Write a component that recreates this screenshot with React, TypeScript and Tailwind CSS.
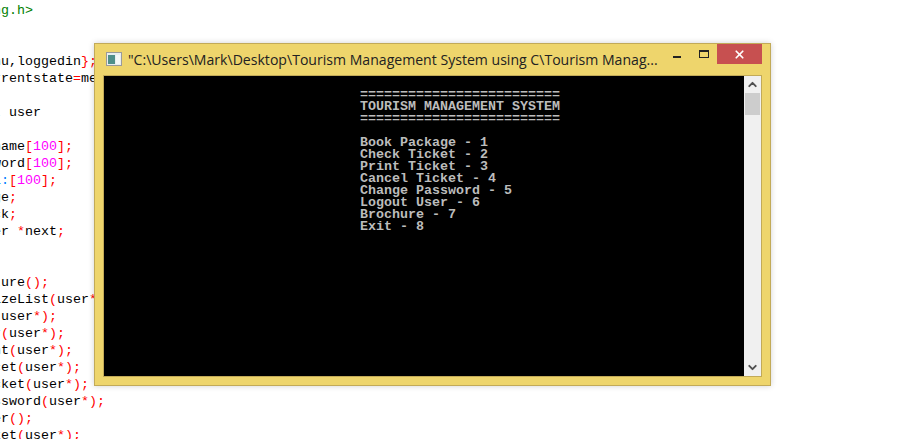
import type { ReactNode } from "react";
import { X, ChevronUp, ChevronDown } from "lucide-react";

// token helpers for the editor text behind the console
const R = ({ children }: { children: ReactNode }) => <span className="text-[#ff0000]">{children}</span>;
const N = ({ children }: { children: ReactNode }) => <span className="text-[#ff00ff]">{children}</span>;
const B = ({ children }: { children: ReactNode }) => <span className="text-[#0080ff]">{children}</span>;

const Arg = () => (
  <>
    <R>(</R>user<R>*);</R>
  </>
);

const codeLines: ReactNode[] = [
  <span className="text-[#008000]">ng.h&gt;</span>,
  "",
  "",
  <>
    nu,loggedin<R>{"};"}</R>
  </>,
  <>
    rrentstate<R>=</R>menu
  </>,
  "",
  <>
    <B>t</B> user
  </>,
  "",
  <>
    name<R>[</R><N>100</N><R>];</R>
  </>,
  <>
    word<R>[</R><N>100</N><R>];</R>
  </>,
  <>
    <B>l:</B>
    <R>[</R><N>100</N><R>];</R>
  </>,
  <>
    ge<R>;</R>
  </>,
  <>
    ck<R>;</R>
  </>,
  <>
    er <R>*</R>next<R>;</R>
  </>,
  "",
  "",
  <>
    ture<R>();</R>
  </>,
  <>
    izeList<R>(</R>user<R>*</R>
  </>,
  <>
    <R>(</R>user<R>*);</R>
  </>,
  <>
    <B>r</B>
    <Arg />
  </>,
  <>
    nt
    <Arg />
  </>,
  <>
    cet
    <Arg />
  </>,
  <>
    cket
    <Arg />
  </>,
  <>
    ssword
    <Arg />
  </>,
  <>
    er<R>();</R>
  </>,
  <>
    ket
    <Arg />
  </>,
];

const menu = [
  "Book Package - 1",
  "Check Ticket - 2",
  "Print Ticket - 3",
  "Cancel Ticket - 4",
  "Change Password - 5",
  "Logout User - 6",
  "Brochure - 7",
  "Exit - 8",
];

const rule = "=========================";

function ConsoleWindow() {
  return (
    <div className="absolute left-[94px] top-[43px] w-[677px] h-[343px] flex flex-col border border-[#c2aa58] bg-[#eed56c] shadow-[0_0_6px_rgba(0,0,0,0.18)]">
      {/* title bar */}
      <div className="h-[31px] flex items-start shrink-0">
        <svg width="16" height="14" viewBox="0 0 16 14" className="ml-[11px] mt-[8px] shrink-0">
          <rect x="0.5" y="0.5" width="15" height="13" fill="#e8eef0" stroke="#9a9a9a" />
          <rect x="2" y="3" width="7" height="9" fill="#4f8f8a" />
          <rect x="10" y="3" width="4" height="9" fill="#f4f8f8" />
        </svg>
        <div className="ml-[6px] mt-[5px] w-[532px] shrink-0 whitespace-nowrap text-[14.08px] leading-[21px] text-[#222] font-['Open_Sans',sans-serif]">
          "C:\Users\Mark\Desktop\Tourism Management System using C\Tourism Manag...
        </div>
        <div className="ml-[4px] w-[26px] h-[20px] flex justify-center pt-[12px]">
          <div className="w-[8px] h-[2px] bg-[#222]" />
        </div>
        <div className="ml-[1px] w-[26px] h-[20px] flex justify-center pt-[6px]">
          <div className="w-[10px] h-[8px] border border-t-2 border-[#222]" />
        </div>
        <div className="w-[45px] h-[20px] bg-[#c75050] flex items-center justify-center">
          <X size={13} strokeWidth={3.2} className="text-white" />
        </div>
      </div>

      {/* client area */}
      <div className="ml-[8px] w-[659px] h-[302px] flex border border-[#c2aa58] bg-black">
        <div className="w-[640px] pl-[256px] pt-[13px] text-[13.33px] leading-[12px] font-bold text-[#bcbcbc] font-['Liberation_Mono',monospace] whitespace-pre">
          <div>{rule}</div>
          <div>TOURISM MANAGEMENT SYSTEM</div>
          <div>{rule}</div>
          <div>&nbsp;</div>
          {menu.map((line) => (
            <div key={line}>{line}</div>
          ))}
        </div>

        {/* scrollbar */}
        <div className="w-[17px] flex flex-col bg-[#f0f0f0]">
          <div className="h-[17px] flex items-center justify-center">
            <ChevronUp size={13} strokeWidth={3.5} className="text-[#505050]" />
          </div>
          <div className="ml-[1px] w-[15px] h-[22px] bg-[#cdcdcd]" />
          <div className="flex-1" />
          <div className="h-[17px] flex items-center justify-center">
            <ChevronDown size={13} strokeWidth={3.5} className="text-[#505050]" />
          </div>
        </div>
      </div>
    </div>
  );
}

export default function App() {
  return (
    <div className="relative w-[911px] h-[439px] overflow-hidden bg-white">
      <pre className="pt-[2px] -ml-[7px] text-[13.33px] leading-[17px] text-black font-['Liberation_Mono',monospace]">
        {codeLines.map((line, i) => (
          <div key={i} className="h-[17px]">
            {line}
          </div>
        ))}
      </pre>
      <ConsoleWindow />
    </div>
  );
}
